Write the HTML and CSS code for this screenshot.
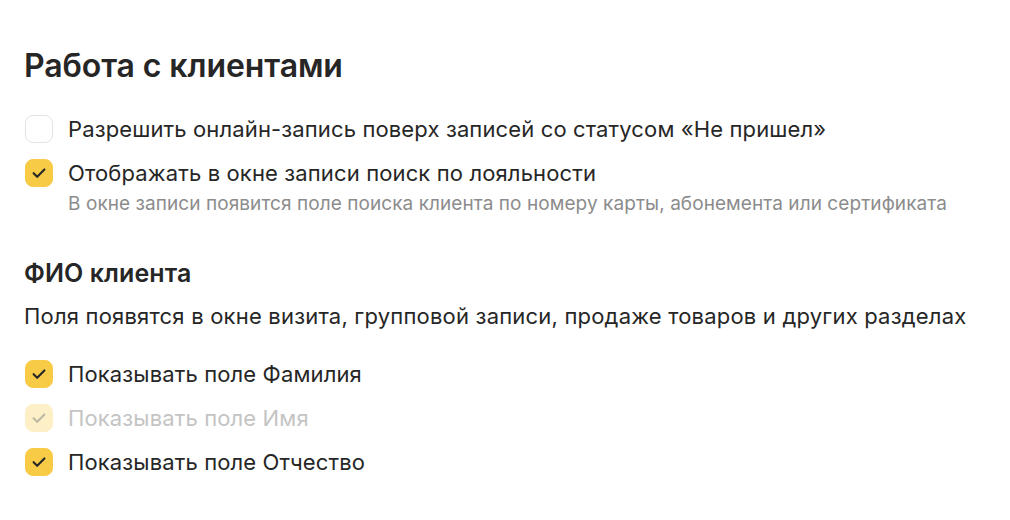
FILE: index.html
```html
<!DOCTYPE html>
<html lang="ru">
<head>
<meta charset="utf-8">
<link rel="stylesheet" href="styles.css">
</head>
<body>
<main class="page">
  <h1 class="title">Работа с клиентами</h1>
  <div class="list">
    <label class="opt">
      <span class="box"></span>
      <span class="label">Разрешить онлайн-запись поверх записей со статусом «Не пришел»</span>
    </label>
    <div class="opt-wrap">
      <label class="opt">
        <span class="box on"><svg viewBox="0 0 28 28"><path d="M8.6 14.2l3.6 3.6 7.2-7.4"/></svg></span>
        <span class="label">Отображать в окне записи поиск по лояльности</span>
      </label>
      <div class="hint">В окне записи появится поле поиска клиента по номеру карты, абонемента или сертификата</div>
    </div>
  </div>

  <h2 class="subtitle">ФИО клиента</h2>
  <p class="desc">Поля появятся в окне визита, групповой записи, продаже товаров и других разделах</p>
  <div class="list list2">
    <label class="opt">
      <span class="box on"><svg viewBox="0 0 28 28"><path d="M8.6 14.2l3.6 3.6 7.2-7.4"/></svg></span>
      <span class="label">Показывать поле Фамилия</span>
    </label>
    <label class="opt disabled">
      <span class="box on"><svg viewBox="0 0 28 28"><path d="M8.6 14.2l3.6 3.6 7.2-7.4"/></svg></span>
      <span class="label">Показывать поле Имя</span>
    </label>
    <label class="opt">
      <span class="box on"><svg viewBox="0 0 28 28"><path d="M8.6 14.2l3.6 3.6 7.2-7.4"/></svg></span>
      <span class="label">Показывать поле Отчество</span>
    </label>
  </div>
</main>
</body>
</html>
```
FILE: styles.css
```css
* { box-sizing: border-box; }
body {
  margin: 0;
  background: #fff;
  font-family: Inter, "Noto Sans", sans-serif;
  color: #262626;
}
.page {
  padding: 46px 24px 0 24px;
}
.title {
  margin: 0;
  font-size: 32px;
  line-height: 40px;
  font-weight: 600;
  letter-spacing: -0.1px;
}
.list {
  margin-top: 29px;
  display: flex;
  flex-direction: column;
  gap: 16px;
}
.opt {
  display: flex;
  align-items: center;
  gap: 15px;
  padding-left: 1px;
}
.box {
  width: 28px;
  height: 28px;
  border-radius: 8px;
  border: 1.5px solid #e3e3e3;
  background: #fff;
  flex: none;
  position: relative;
}
.box.on {
  background: #f8cb47;
  border-color: #f8cb47;
}
.box svg {
  position: absolute;
  left: -1.5px;
  top: -1.5px;
  width: 28px;
  height: 28px;
  fill: none;
  stroke: #262626;
  stroke-width: 2.1;
  stroke-linecap: round;
  stroke-linejoin: round;
}
.label {
  font-size: 22px;
  line-height: 28px;
  letter-spacing: 0.13px;
}
.hint {
  margin: 5px 0 0 44px;
  font-size: 19px;
  line-height: 24px;
  letter-spacing: 0.07px;
  color: #8c8c8c;
}
.disabled .box.on {
  background: #fdf0c6;
  border-color: #fdf0c6;
}
.disabled .box svg { stroke: #bfb9a6; }
.disabled .label { color: #c4c4c4; }
.subtitle {
  margin: 41px 0 0 0;
  font-size: 25px;
  line-height: 32px;
  font-weight: 600;
  letter-spacing: 0.1px;
}
.desc {
  margin: 13px 0 0 0;
  font-size: 22px;
  line-height: 28px;
  letter-spacing: 0.2px;
}
.list2 {
  margin-top: 30px;
}
```
